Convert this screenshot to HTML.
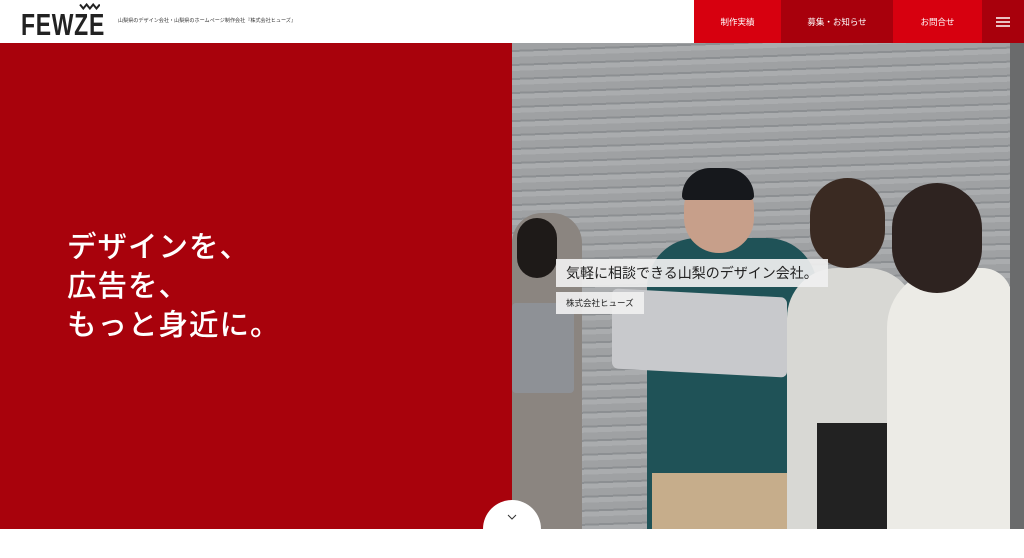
<!DOCTYPE html>
<html><head><meta charset="utf-8"><style>
*{margin:0;padding:0;box-sizing:border-box}
body{width:1024px;height:529px;overflow:hidden;background:#fff;font-family:"Liberation Sans","Noto Sans CJK JP",sans-serif;position:relative}
.hdr{position:absolute;left:0;top:0;width:1024px;height:43px;background:#fff}
.logo{position:absolute;left:21px;top:9px;font-size:31px;font-weight:bold;letter-spacing:1px;color:#222;transform:scaleX(.74);transform-origin:left;line-height:31px}
.crown{position:absolute;left:79px;top:3px;width:21px;height:7px}
.tag{position:absolute;left:118px;top:16px;font-size:10px;color:#333;transform:scale(.51);transform-origin:left top;white-space:nowrap}
.nav{position:absolute;top:0;height:43px;color:#fff;font-size:8.5px;display:flex;align-items:center;justify-content:center}
.red{position:absolute;left:0;top:43px;width:512px;height:486px;background:#a8020c}
.h1{position:absolute;left:67px;top:228px;color:#fff;font-size:29.5px;line-height:39px;font-weight:500;letter-spacing:1px}
.photo{position:absolute;left:512px;top:43px;width:512px;height:486px;background:repeating-linear-gradient(178deg,#9fa1a3 0 7px,#8c8f92 7px 9px,#aaacae 9px 14px);overflow:hidden}
.b{position:absolute}
.cap1{position:absolute;left:556px;top:259px;background:rgba(240,240,240,.92);padding:4px 10px;font-size:14px;color:#222}
.cap2{position:absolute;left:556px;top:292px;background:rgba(240,240,240,.92);padding:5px 10px;font-size:8.5px;color:#222}
.circ{position:absolute;left:483px;top:500px;width:58px;height:58px;border-radius:50%;background:#fff}
</style></head><body>
<div class="hdr">
<svg class="crown" viewBox="0 0 21 7"><path d="M1 1.5l3.3 4 3.3-4 3.3 4 3.3-4 3.3 4 3.3-4" stroke="#222" stroke-width="2" fill="none"/></svg>
<div class="logo">FEWZE</div>
<div class="tag">山梨県のデザイン会社・山梨県のホームページ制作会社『株式会社ヒューズ』</div>
<div class="nav" style="left:694px;width:87px;background:#d7000f">制作実績</div>
<div class="nav" style="left:781px;width:112px;background:#a8000c">募集・お知らせ</div>
<div class="nav" style="left:893px;width:89px;background:#d7000f">お問合せ</div>
<div class="nav" style="left:982px;width:42px;background:#a8000c"><svg width="14" height="10"><path d="M0 1h14M0 5h14M0 9h14" stroke="#fff" stroke-width="1.5"/></svg></div>
</div>
<div class="red"></div>
<div class="h1">デザインを、<br>広告を、<br>もっと身近に。</div>
<div class="photo">
<div class="b" style="left:0;top:170px;width:70px;height:320px;background:#8b8580;border-radius:30px 30px 0 0"></div>
<div class="b" style="left:5px;top:175px;width:40px;height:60px;background:#1e1a18;border-radius:20px"></div>
<div class="b" style="left:135px;top:195px;width:170px;height:300px;background:#1f5257;border-radius:50px 50px 0 0"></div>
<div class="b" style="left:172px;top:130px;width:70px;height:80px;background:#c79f8a;border-radius:35px"></div>
<div class="b" style="left:170px;top:125px;width:72px;height:32px;background:#16181c;border-radius:30px 30px 4px 4px"></div>
<div class="b" style="left:140px;top:430px;width:140px;height:60px;background:#c6ad8b"></div>
<div class="b" style="left:275px;top:225px;width:130px;height:270px;background:#d8d8d4;border-radius:50px 50px 0 0"></div>
<div class="b" style="left:298px;top:135px;width:75px;height:90px;background:#3a2a22;border-radius:40px"></div>
<div class="b" style="left:305px;top:380px;width:100px;height:110px;background:#222"></div>
<div class="b" style="left:375px;top:225px;width:125px;height:265px;background:#ecebe6;border-radius:60px 30px 0 0"></div>
<div class="b" style="left:380px;top:140px;width:90px;height:110px;background:#2e2320;border-radius:45px"></div>
<div class="b" style="left:100px;top:250px;width:175px;height:80px;background:#c8c9cc;border-radius:6px;transform:skewY(3deg)"></div>
<div class="b" style="left:0;top:260px;width:62px;height:90px;background:#8e9196;border-radius:4px"></div>
<div class="b" style="left:498px;top:0;width:14px;height:486px;background:#6a6b6c"></div>
</div>
<div class="cap1">気軽に相談できる山梨のデザイン会社。</div>
<div class="cap2">株式会社ヒューズ</div>
<div class="circ"><svg style="position:absolute;left:24px;top:14px" width="10" height="6"><path d="M1 1l4 4 4-4" stroke="#333" fill="none"/></svg></div>
</body></html>
